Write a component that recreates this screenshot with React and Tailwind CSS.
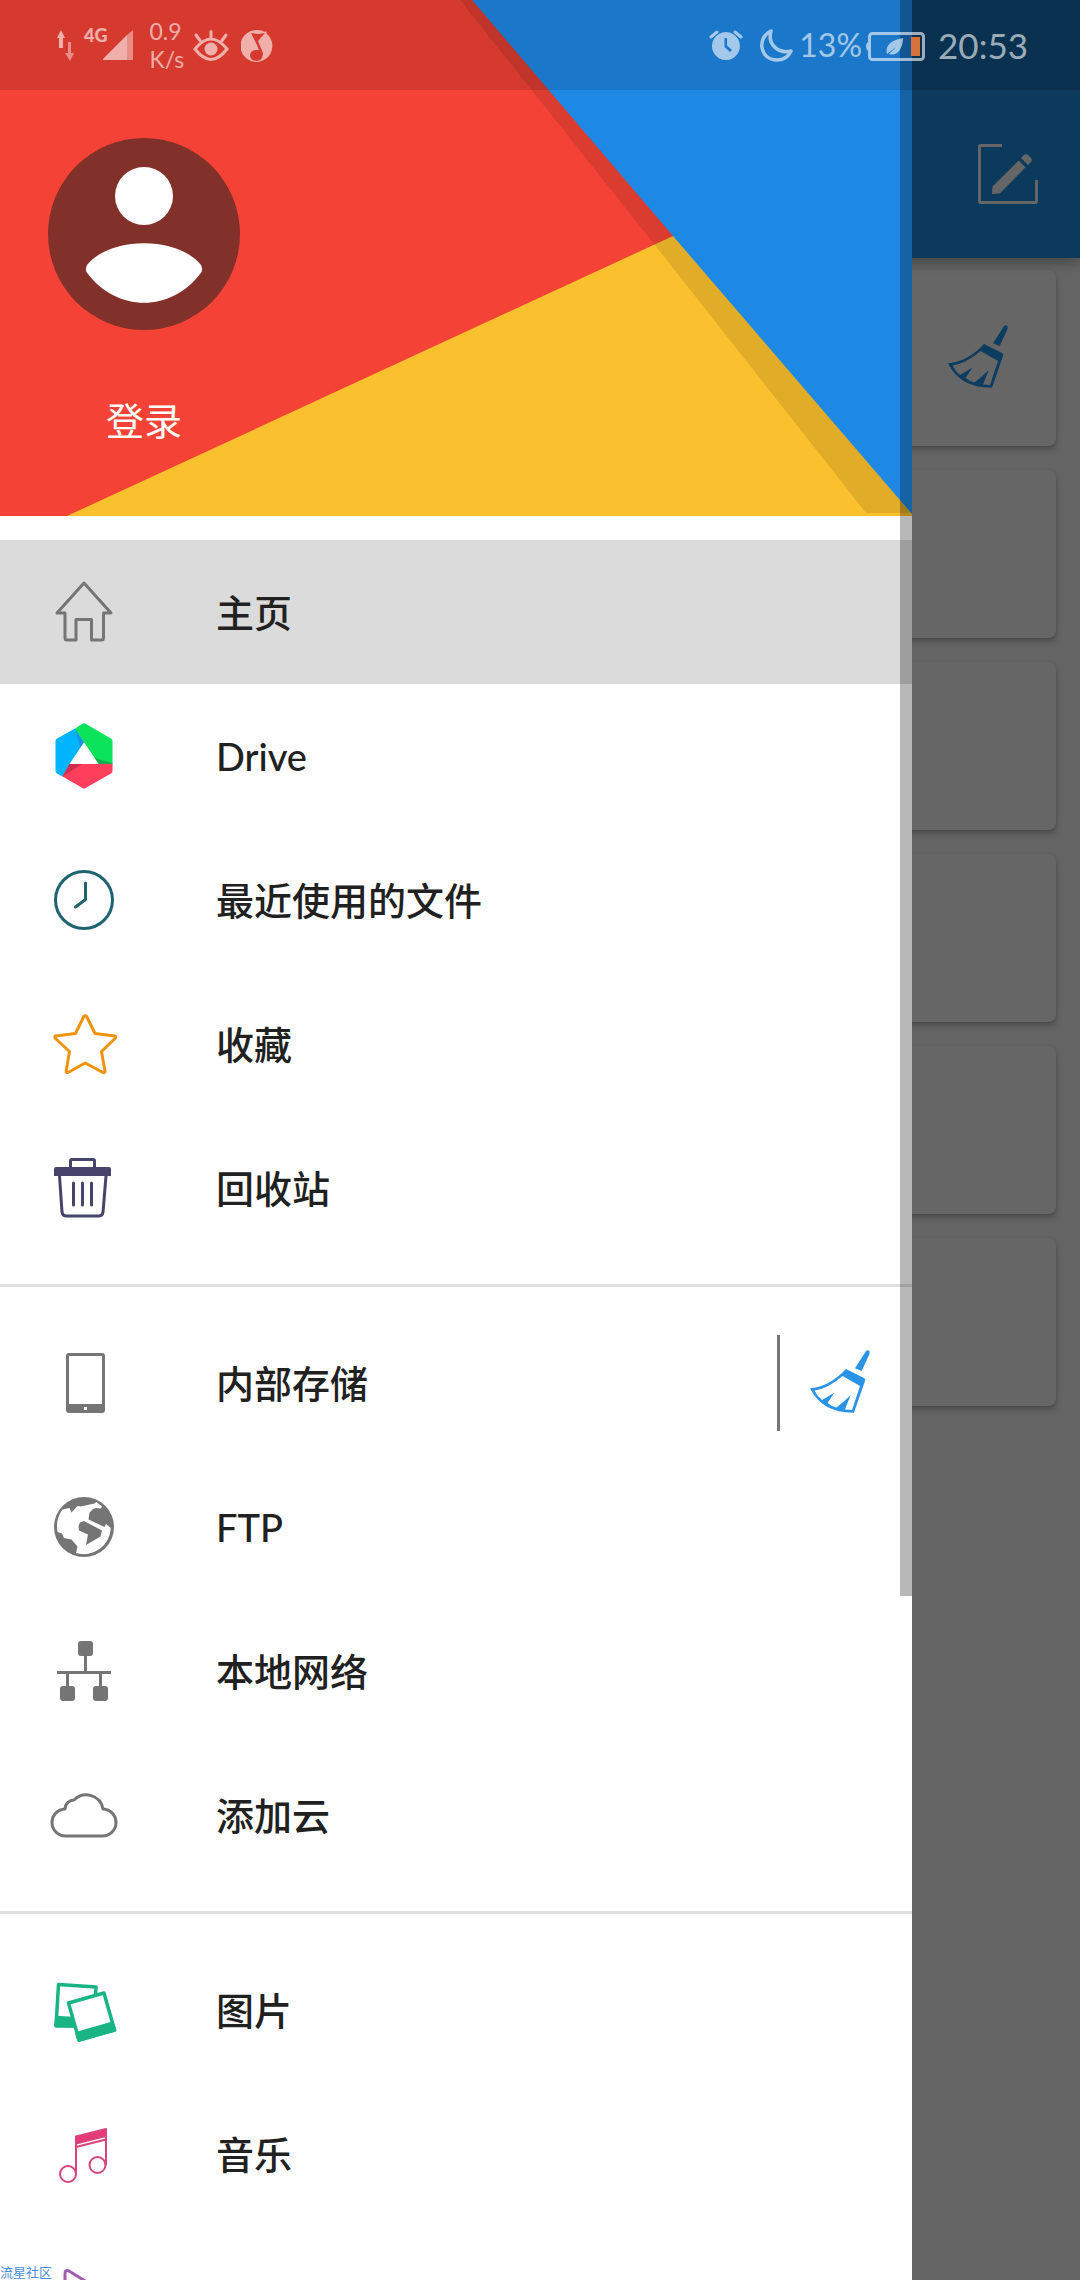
import React, { useState } from 'react';

const HomeIcon = () => (
  <path
    d="M36 7 63 37H55.500V62q0 2-2 2H43.500V43.500H28V64H19q-2 0-2-2V37H9Z"
    fill="none"
    stroke="#757575"
    strokeWidth="3"
    strokeLinejoin="round"
  />
);

const DriveIcon = () => (
  <>
    <path d="M27 8.500 9 18.500q-1.500 1-1.500 2.500V51q0 1.500 1.500 2.500L14.500 56.500 36 22.500Z" fill="#00b4ff" />
    <path d="M27 8.500 34.500 3.800q1.500-1 3 0L63 18.500q1.500 1 1.500 2.500V44H50.500L36 22.500Z" fill="#0be35a" />
    <path d="M64.500 44V51q0 1.500-1.500 2.500L37.500 68q-1.500 1-3 0L14.500 56.500 21.500 44Z" fill="#ff3f5b" />
    <path d="M27 8.500 36 22.500 32.500 28Z" fill="#1494e0" />
    <path d="M46.500 38 64.500 43V44H50.500Z" fill="#12b04c" />
    <path d="M21.500 44H34L14.500 56.500Z" fill="#d02c50" />
    <path d="M36 22.500 50.500 44H21.500Z" fill="#fff" />
  </>
);

const ClockIcon = () => (
  <g fill="none" stroke="#1f636f" strokeWidth="3">
    <circle cx="36" cy="36" r="28.500" />
    <path d="M37.500 19V35.500L27.500 43" strokeLinecap="round" strokeLinejoin="round" />
  </g>
);

const StarIcon = () => (
  <path
    d="M35.800 8.500q1.500-1.500 2.800 0L47 25.500 67 28q1.500 1 0 2.500L53.500 43.500 57 63q0 2-2 1.500L37.200 55 20 64.500q-2 .5-1.800-1.500L21.500 43.500 7.500 30.500q-1.200-1.500 0-2.500L27.500 25.500Z"
    fill="none"
    stroke="#ef930f"
    strokeWidth="3"
    strokeLinejoin="round"
  />
);

const TrashIcon = () => (
  <g fill="none" stroke="#46446a" strokeWidth="3">
    <path d="M22.500 16V9q0-1.500 1.500-1.500H45q1.500 0 1.500 1.500V16" />
    <path d="M6 24V17q0-2 2-2H61q2 0 2 2V24Z" fill="#46446a" stroke="none" />
    <path d="M11.500 24 14 60q.5 4 4.500 4H50.500q4 0 4.500-4L58 24" />
    <path d="M25.500 31V53M34.500 31V53M43.500 31V53" strokeLinecap="round" />
  </g>
);

const PhoneIcon = () => (
  <path
    fill="#757575"
    fillRule="evenodd"
    d="M21 6H54q3 0 3 3V63q0 3-3 3H21q-3 0-3-3V9q0-3 3-3ZM21 9V57H54V9ZM36 60V63H39V60Z"
  />
);

const GlobeIcon = () => (
  <>
    <circle cx="36" cy="36" r="30" fill="#757575" />
    <path
      fill="#fff"
      d="M14.500 18.500 21.500 17 23.500 21.500 29.500 15 32.500 15.500 46.500 12.500 48.500 11 54 15.500 53 17.500 48 17 45 18 41.500 21.500 40.500 28.500 56.500 36 58 33 62.800 37A27 27 0 0 1 28 62L29.500 55.500 23.500 48.500 16 47 14 42.500 9.500 41 9 36A27 27 0 0 1 14.500 18.500Z"
    />
    <path fill="#757575" d="M30.500 35 32 31.500 36 30 54 39.500 52.500 45.500 38 54 40 43.500 31 39.500Z" />
  </>
);

const NetworkIcon = () => (
  <g fill="#757575">
    <rect x="30" y="6" width="15" height="15" rx="3" />
    <rect x="12" y="51" width="15" height="15" rx="3" />
    <rect x="45" y="51" width="15" height="15" rx="3" />
    <path d="M36 21H39V36H63V39H54V51H51V39H21V51H18V39H9V36H36Z" />
  </g>
);

const CloudIcon = () => (
  <path
    d="M18 57A13.500 13.500 0 0 1 17 30A9 9 0 0 1 26 21A17 17 0 0 1 55 30A13.500 13.500 0 0 1 54 57Z"
    fill="none"
    stroke="#757575"
    strokeWidth="3"
    strokeLinejoin="round"
  />
);

const PicturesIcon = () => (
  <g stroke="#18b583" strokeWidth="3.500" strokeLinejoin="round">
    <path d="M10.500 10.500 48 13 46 52 8 52Z" fill="#fff" />
    <path d="M9 43.500 46 46 45 53 8 51Z" fill="#18b583" />
    <path d="M20.500 29 56 19 66.500 56 31 66Z" fill="#fff" />
    <path d="M29 59.500 64 49.500 66.500 56 31 66Z" fill="#18b583" />
  </g>
);

const MusicIcon = () => (
  <g fill="none" stroke="#d8447a" strokeWidth="2">
    <circle cx="20" cy="56" r="8" />
    <circle cx="49.500" cy="47" r="8" />
    <path d="M28 56V18M58 47V11M28 29 58 21.500" />
    <path d="M28 18.500 58 11V18L28 25.500Z" fill="#e83a78" strokeLinejoin="round" />
  </g>
);

const VideoIcon = () => (
  <path
    d="M17 60V11.500q0-4 4-2.500L60 33q3 2 0 4L21 63q-4 2-4-3Z"
    fill="none"
    stroke="#a05cb0"
    strokeWidth="3"
  />
);

const Icon = ({ children }) => (
  <svg viewBox="0 0 72 72" className="size-18 shrink-0" aria-hidden="true">
    {children}
  </svg>
);

const BroomIcon = ({ color }) => (
  <Icon>
    <g fill={color}>
      <path d="M62 4Q63.500 2.500 65.500 4V7L57.700 24 51 21.300Z" />
      <path
        fillRule="evenodd"
        d="M42 22 60 31Q62 32 61 34L50 65.700Q18 66 6 41.300Q25 40 42 22ZM38.500 29Q25 41 10.500 43.500 13 49 18 53L30.300 45.700 23.500 56Q27 59 32.500 60.500 41 54 46.700 48L41 62.500 48 63 56 39Z"
      />
    </g>
  </Icon>
);

const EditIcon = () => (
  <Icon>
    <path d="M30 7.500H9Q7.500 7.500 7.500 9V63Q7.500 64.500 9 64.500H63Q64.500 64.500 64.500 63V42" fill="none" stroke="#fff" strokeWidth="3" />
    <path d="M20 56 20.500 48.500 46.700 22.500 53.500 29.300 28 55.300ZM49 20 52 17Q54 15.500 56 17L59 20Q60.500 22 59 24L56 27Z" fill="#fff" />
  </Icon>
);

const groups = [
  [
    { id: 'home', name: '主页', icon: HomeIcon },
    { id: 'drive', name: 'Drive', icon: DriveIcon },
    { id: 'recent', name: '最近使用的文件', icon: ClockIcon },
    { id: 'favorites', name: '收藏', icon: StarIcon },
    { id: 'trash', name: '回收站', icon: TrashIcon },
  ],
  [
    { id: 'storage', name: '内部存储', icon: PhoneIcon, cleanable: true },
    { id: 'ftp', name: 'FTP', icon: GlobeIcon },
    { id: 'network', name: '本地网络', icon: NetworkIcon },
    { id: 'cloud', name: '添加云', icon: CloudIcon },
  ],
  [
    { id: 'pictures', name: '图片', icon: PicturesIcon },
    { id: 'music', name: '音乐', icon: MusicIcon },
    { id: 'video', icon: VideoIcon },
  ],
];

const StatusBar = () => (
  <div className="absolute inset-x-0 top-0 flex h-[90px] items-center justify-between bg-black/12 pr-[52px] pl-14 text-white/60">
    <div className="flex items-center">
      <svg viewBox="0 0 20 36" className="h-9 w-5" fill="currentColor" aria-hidden="true">
        <path d="M5 3 9 11H7V21H3V11H1Z" />
        <path d="M12 15H15V26H18L14 34 9 26H12Z" opacity=".7" />
      </svg>
      <span className="mt-2 -mr-1 ml-2 self-start text-[18px] leading-5 font-black">4G</span>
      <svg viewBox="0 0 30 36" className="h-9 w-[30px]" aria-hidden="true">
        <path d="M0 33V32L24 8V33Z" fill="currentColor" />
        <path d="M24 8 30 3V33H24Z" fill="currentColor" opacity=".7" />
      </svg>
      <span className="ml-4 w-9 text-[23px] leading-7">
        0.9
        <br />
        K/s
      </span>
      <svg viewBox="0 0 36 36" className="ml-2 size-9" fill="none" stroke="currentColor" strokeWidth="3" strokeLinecap="round" aria-hidden="true">
        <path d="M2 22Q18 2 34 22Q18 43 2 22ZM18 4.500V10M3 8 7 13.500M33 8 29 13.500" />
        <circle cx="18" cy="22" r="6.500" fill="currentColor" stroke="none" />
      </svg>
      <svg viewBox="0 0 32 36" className="ml-3 h-9 w-8" aria-hidden="true">
        <path
          fill="currentColor"
          fillRule="evenodd"
          d="M16 3Q21 3 24 5L25 4 26 7A16 16 0 1 1 16 3ZM10 6 16 18 18 23Q9 22 9 29 10 34 16 34 22 33 22 26L17 14 24 6 17 7Z"
        />
      </svg>
    </div>
    <div className="flex items-center">
      <svg viewBox="0 0 34 36" className="h-9 w-[34px]" aria-hidden="true">
        <path fill="currentColor" fillRule="evenodd" d="M17 5A14 14 0 1 1 16.900 5ZM15.500 11V20L21 25 23 23 18 18.500V11Z" />
        <path d="M2 10 8 5M32 10 26 5" stroke="currentColor" strokeWidth="3" strokeLinecap="round" />
      </svg>
      <svg viewBox="0 0 36 36" className="ml-4 size-9" fill="none" stroke="currentColor" strokeWidth="3.500" strokeLinejoin="round" aria-hidden="true">
        <path d="M12 4C-2 10 0 33 18 33Q28 33 32 24C20 27 8 18 12 4Z" />
      </svg>
      <span className="ml-1 text-[32px] leading-9">13%</span>
      <svg viewBox="0 0 60 36" className="ml-1 h-9 w-[60px]" aria-hidden="true">
        <rect x="3.500" y="6.500" width="54" height="26" rx="3" fill="none" stroke="currentColor" strokeWidth="3" />
        <path d="M2 15Q0 16 0 19.500T2 24Z" fill="currentColor" />
        <path d="M21 27C19 17 27 13 37 11 37 20 32 30 23 27L30 20Z" fill="currentColor" />
        <rect x="45" y="10" width="9" height="19" fill="#d9713c" />
      </svg>
      <time className="ml-3 text-[35px] leading-9">20:53</time>
    </div>
  </div>
);

const DrawerHeader = () => (
  <div className="relative h-[516px] shrink-0 bg-[#f44336]">
    <svg viewBox="0 0 912 516" preserveAspectRatio="none" className="absolute inset-0 size-full" aria-hidden="true">
      <path d="M67 516 673 236H912V516Z" fill="#fbc02d" />
      <path d="M460 0 654 244 866 513H912V0Z" fill="#000" opacity=".1" />
      <path d="M472 0 673 236 912 514V0Z" fill="#1e88e5" />
    </svg>
    <button type="button" className="relative mt-[138px] ml-12 w-48 text-[38px] leading-[52px] text-white">
      <svg viewBox="0 0 192 192" className="mb-16 size-48" aria-hidden="true">
        <circle cx="96" cy="96" r="96" fill="#82302a" />
        <circle cx="96" cy="58" r="29" fill="#fff" />
        <path d="M38.500 134Q37 131 39 127C62 98 130 98 153 127Q155 131 153.500 134C124 175 68 175 38.500 134Z" fill="#fff" />
      </svg>
      登录
    </button>
  </div>
);

const MenuRow = ({ item, active, onSelect }) => {
  const Glyph = item.icon;

  return (
    <li className={active ? 'flex h-36 items-center bg-[#dbdbdb]' : 'flex h-36 items-center'}>
      <button
        type="button"
        aria-label={item.name || item.id}
        onClick={onSelect}
        className="flex h-full grow items-center gap-24 pl-12 text-left"
      >
        <Icon>
          <Glyph />
        </Icon>
        {item.name && <span>{item.name}</span>}
      </button>
      {item.cleanable && (
        <button type="button" aria-label="清理" className="h-24 border-l-3 border-[#757575] pr-9 pl-6">
          <BroomIcon color="#2b93e6" />
        </button>
      )}
    </li>
  );
};

const Drawer = () => {
  const [selected, setSelected] = useState('home');

  return (
    <aside className="absolute inset-y-0 left-0 w-[calc(100%-168px)] overflow-hidden bg-white">
      <DrawerHeader />
      <nav className="text-[38px] leading-[52px] font-medium text-[#212121]">
        {groups.map((items, index) => (
          <ul key={index} className={index > 0 ? 'border-t-3 border-[#e0e0e0] py-6' : 'py-6'}>
            {items.map((item) => (
              <MenuRow
                key={item.id}
                item={item}
                active={selected === item.id}
                onSelect={() => setSelected(item.id)}
              />
            ))}
          </ul>
        ))}
      </nav>
      {/* Scroll thumb */}
      <div className="absolute top-0 right-0 h-[70%] w-3 bg-black/28"></div>
    </aside>
  );
};

const App = () => {
  return (
    <div className="relative h-screen overflow-hidden bg-[#fafafa] font-[Lato,'Noto_Sans_CJK_SC',sans-serif]">
      <header className="relative flex justify-end bg-[#1e91e6] pt-[90px] shadow-[0_6px_10px_rgba(0,0,0,0.25)]">
        <button type="button" aria-label="编辑" className="py-12 pr-9">
          <EditIcon />
        </button>
      </header>
      <main className="flex flex-col gap-6 px-6 pt-3">
        <section className="flex h-44 items-center justify-end rounded-lg bg-white pr-[42px] shadow-[0_3px_6px_rgba(0,0,0,0.3)]">
          <button type="button" aria-label="清理">
            <BroomIcon color="#2196f3" />
          </button>
        </section>
        {[1, 2, 3, 4, 5].map((card) => (
          <section key={card} className="h-42 rounded-lg bg-white shadow-[0_3px_6px_rgba(0,0,0,0.3)]"></section>
        ))}
      </main>

      <div className="absolute inset-0 bg-black/60"></div>
      <Drawer />
      <StatusBar />
      <span className="absolute bottom-0 left-0 text-[13px] leading-4 text-[#4a90d9]">流星社区</span>
    </div>
  );
};

export default App;
